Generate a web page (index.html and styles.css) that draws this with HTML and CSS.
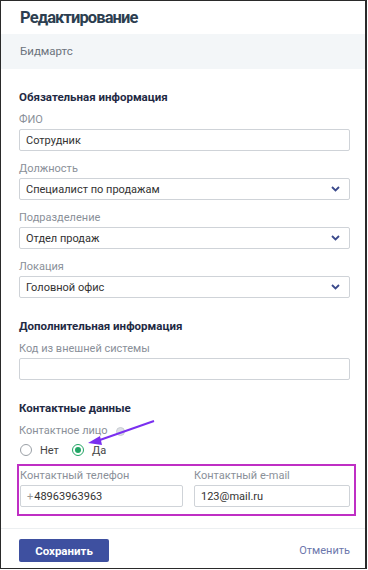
FILE: index.html
```html
<!DOCTYPE html>
<html lang="ru">
    <head>
        <meta charset="UTF-8" />
        <meta name="viewport" content="width=device-width, initial-scale=1.0" />
        <title>Редактирование</title>
        <link rel="stylesheet" href="styles.css">
    </head>
    <body>
        <div class="dialog">
            <div class="head">
                <h1>Редактирование</h1>
            </div>
            <div class="company">Бидмартс</div>

            <div class="body">
                <div class="group">
                    <h2>Обязательная информация</h2>
                    <div class="field">
                        <label>ФИО</label>
                        <div class="input">Сотрудник</div>
                    </div>
                    <div class="field">
                        <label>Должность</label>
                        <div class="input select">
                            <span>Специалист по продажам</span>
                            <svg width="9" height="6" viewBox="0 0 9 6"><path d="M1 1 L4.5 4.5 L8 1" fill="none" stroke="#3b4a8c" stroke-width="1.8"/></svg>
                        </div>
                    </div>
                    <div class="field">
                        <label>Подразделение</label>
                        <div class="input select">
                            <span>Отдел продаж</span>
                            <svg width="9" height="6" viewBox="0 0 9 6"><path d="M1 1 L4.5 4.5 L8 1" fill="none" stroke="#3b4a8c" stroke-width="1.8"/></svg>
                        </div>
                    </div>
                    <div class="field">
                        <label>Локация</label>
                        <div class="input select">
                            <span>Головной офис</span>
                            <svg width="9" height="6" viewBox="0 0 9 6"><path d="M1 1 L4.5 4.5 L8 1" fill="none" stroke="#3b4a8c" stroke-width="1.8"/></svg>
                        </div>
                    </div>
                </div>

                <div class="group">
                    <h2>Дополнительная информация</h2>
                    <div class="field">
                        <label>Код из внешней системы</label>
                        <div class="input"></div>
                    </div>
                </div>

                <div class="group last">
                    <h2>Контактные данные</h2>
                    <label class="with-help">Контактное лицо <i class="help"></i></label>
                    <div class="radios">
                        <span class="radio"><i class="dot"></i>Нет</span>
                        <span class="radio checked"><i class="dot"></i>Да</span>
                    </div>
                    <div class="contacts">
                        <div class="field">
                            <label>Контактный телефон</label>
                            <div class="input"><span><span class="plus">+</span>48963963963</span></div>
                        </div>
                        <div class="field">
                            <label>Контактный e-mail</label>
                            <div class="input">123@mail.ru</div>
                        </div>
                    </div>
                </div>
            </div>

            <div class="foot">
                <button class="save">Сохранить</button>
                <a class="cancel">Отменить</a>
            </div>

            <!-- стрелка-указатель -->
            <svg class="arrow" width="80" height="36" viewBox="0 0 80 36">
                <path d="M69 5 L12 25" stroke="#7a2ff0" stroke-width="2" fill="none"/>
                <polygon points="3,27 15,20 17,29" fill="#7a2ff0"/>
            </svg>
        </div>
    </body>
</html>
```

FILE: styles.css
```css
body {
    margin: 0;
    font-family: Roboto, "Noto Sans", sans-serif;
    font-size: 11px;
    color: #333;
}
h1,
h2 {
    margin: 0;
}
.dialog {
    position: relative;
    width: 367px;
    height: 569px;
    box-sizing: border-box;
    border: 1px solid #2a2a2a;
    border-right-width: 2px;
    background: #fff;
}
.head {
    height: 33px;
    padding: 0 19px;
}
.head h1 {
    font-size: 16.5px;
    line-height: 34px;
    color: #2c3e50;
    font-weight: 700;
    letter-spacing: -0.9px;
}
.company {
    height: 35px;
    line-height: 35px;
    padding: 0 19px;
    background: #f3f6f8;
    color: #6b737c;
    font-size: 11.5px;
}
.body {
    padding: 20px 15px 12px 18px;
    border-bottom: 1px solid #eceff1;
}
.group {
    margin-bottom: 20px;
}
.group.last {
    margin-bottom: 0;
}
.group h2 {
    font-size: 11.5px;
    line-height: 16px;
    color: #1f2a44;
    margin-bottom: 7px;
}
label {
    display: block;
    line-height: 16px;
    margin-bottom: 1px;
    color: #8a9099;
}
.field {
    margin-bottom: 10px;
}
.input {
    display: flex;
    align-items: center;
    height: 22px;
    box-sizing: border-box;
    border: 1px solid #cfd3d8;
    border-radius: 2px;
    padding: 0 9px 0 6px;
    color: #333;
}
.input.select {
    justify-content: space-between;
}
.input svg {
    display: block;
}
.with-help {
    display: flex;
    align-items: center;
    gap: 8px;
    margin-bottom: 3px;
}
.help {
    width: 9px;
    height: 9px;
    border-radius: 50%;
    background: #dde0e5;
    border: 1px solid #c9cdd3;
    box-sizing: border-box;
}
.radios {
    display: flex;
    gap: 12px;
    height: 16px;
    align-items: center;
    margin-bottom: 6px;
}
.radio {
    display: flex;
    align-items: center;
    gap: 8px;
    color: #444;
}
.radio .dot {
    width: 12px;
    height: 12px;
    box-sizing: border-box;
    border: 1px solid #9aa0a6;
    border-radius: 50%;
    margin-left: 1px;
    display: flex;
    align-items: center;
    justify-content: center;
}
.radio.checked .dot {
    border: 1.5px solid #22a565;
}
.radio.checked .dot::after {
    content: "";
    width: 6px;
    height: 6px;
    border-radius: 50%;
    background: #22a565;
}
.contacts {
    display: grid;
    grid-template-columns: 163px 1fr;
    gap: 11px;
    margin: 0 -6px 0 -2px;
    padding: 2px 4px 7px 1px;
    border: 2px solid #bf2fc4;
}
.contacts .field {
    margin-bottom: 0;
}
.plus {
    color: #999;
    margin-right: 1px;
}
.foot {
    display: flex;
    justify-content: space-between;
    align-items: center;
    padding: 10px 15px 0 18px;
}
.save {
    width: 90px;
    height: 23px;
    border: 0;
    border-radius: 2px;
    background: #3e50a0;
    color: #fff;
    font-family: inherit;
    font-size: 11.5px;
    font-weight: 700;
}
.cancel {
    color: #6c77ac;
}
.arrow {
    position: absolute;
    left: 84px;
    top: 415px;
}
```
